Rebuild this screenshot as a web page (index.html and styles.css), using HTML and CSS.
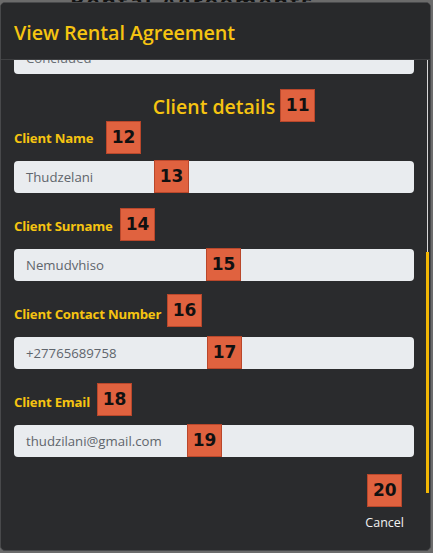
FILE: index.html
```html
<!DOCTYPE html>
<html>
<head>
<meta charset="utf-8">
<link rel="stylesheet" href="styles.css">
</head>
<body>
<div class="backdrop-text">Rental Agreements</div>
<div class="modal">
  <div class="modal-header">
    <h1 class="modal-title">View Rental Agreement</h1>
  </div>
  <div class="modal-body">
    <div class="content">
      <div class="input input-top">Concluded</div>
      <h2 class="section-title"><span class="section-text">Client details<span class="badge b11">11</span></span></h2>

      <div class="field">
        <label class="label">Client Name<span class="badge b12">12</span></label>
        <div class="input">Thudzelani<span class="badge b13">13</span></div>
      </div>
      <div class="field">
        <label class="label">Client Surname<span class="badge b14">14</span></label>
        <div class="input">Nemudvhiso<span class="badge b15">15</span></div>
      </div>
      <div class="field">
        <label class="label">Client Contact Number<span class="badge b16">16</span></label>
        <div class="input">+27765689758<span class="badge b17">17</span></div>
      </div>
      <div class="field">
        <label class="label">Client Email<span class="badge b18">18</span></label>
        <div class="input">thudzilani@gmail.com<span class="badge b19">19</span></div>
      </div>

      <div class="footer">
        <button class="cancel">Cancel<span class="badge b20">20</span></button>
      </div>
    </div>
    <div class="scroll-track"><div class="scroll-thumb"></div></div>
  </div>
</div>
</body>
</html>
```

FILE: styles.css
```css
* { box-sizing: border-box; }
html, body { margin: 0; padding: 0; }
body {
  width: 433px;
  height: 553px;
  background: #6b6b6b;
  overflow: hidden;
  position: relative;
  font-family: "Open Sans", "Noto Sans", sans-serif;
}
.backdrop-text {
  position: absolute;
  top: -14px;
  left: 70px;
  font-size: 22px;
  font-weight: 700;
  color: #111;
  letter-spacing: 2px;
}
.modal {
  position: relative;
  margin-top: 2px;
  width: 431px;
  height: 549px;
  background: #2a2b2d;
  border: 1px solid #48494b;
  border-radius: 5px;
  display: flex;
  flex-direction: column;
  overflow: hidden;
}
.modal-header {
  height: 57px;
  flex: none;
  display: flex;
  align-items: center;
  padding: 0 13px;
  background: #28292b;
  border-bottom: 1px solid #3f4042;
}
.modal-title {
  margin: 0;
  margin-top: 3px;
  font-size: 19.8px;
  font-weight: 600;
  color: #f6c411;
  letter-spacing: -0.1px;
}
.modal-body {
  flex: 1;
  position: relative;
  overflow: hidden;
}
.content {
  padding: 0 16px 0 13px;
  margin-top: -18px;
}
.input {
  position: relative;
  height: 32px;
  background: #e9ecef;
  border-radius: 4px;
  padding: 0 12px;
  display: flex;
  align-items: center;
  font-size: 13.2px;
  color: #5f656c;
}
.input-top {
  color: #6a6f75;
}
.section-title {
  margin: 19px 0 0;
  height: 28px;
  text-align: center;
  font-size: 19.5px;
  font-weight: 600;
  color: #f6c411;
  line-height: 28px;
}
.section-text {
  position: relative;
}
.field {
  margin-top: 7px;
}
.field + .field {
  margin-top: 23px;
}
.label {
  position: relative;
  display: block;
  height: 20px;
  line-height: 20px;
  font-size: 13.2px;
  font-weight: 700;
  color: #f6c411;
  letter-spacing: -0.2px;
  margin-bottom: 13px;
}
.footer {
  display: flex;
  justify-content: flex-end;
  padding-right: 10px;
  margin-top: 57px;
}
.cancel {
  position: relative;
  background: none;
  border: none;
  padding: 0;
  color: #f2f2f2;
  font-family: "Open Sans", "Noto Sans", sans-serif;
  font-size: 12.5px;
  line-height: 18px;
}
.badge {
  position: absolute;
  width: 35px;
  height: 33px;
  background: #e0623f;
  border: 1px solid #b9472b;
  color: #111;
  font-family: "DejaVu Sans", sans-serif;
  font-weight: 700;
  font-size: 17px;
  line-height: 31px;
  text-align: center;
  letter-spacing: 0;
}
.b11 { left: calc(100% + 5px); top: -4px; }
.b12 { left: 92px; top: -7px; }
.b13 { left: 140px; top: -1px; }
.b14 { left: 106px; top: -8px; }
.b15 { left: 192px; top: -1px; }
.b16 { left: 153px; top: -10px; }
.b17 { left: 193px; top: -1px; }
.b18 { left: 83px; top: -9px; }
.b19 { left: 173px; top: -1px; }
.b20 { left: 2px; top: -40px; }
.scroll-track {
  position: absolute;
  right: 1px;
  top: -3px;
  bottom: 57px;
  width: 3px;
  display: flex;
  flex-direction: column;
}
.scroll-track::before {
  content: "";
  height: 195px;
  width: 1px;
  margin-left: 1px;
  background: #d8d8d8;
  flex: none;
}
.scroll-thumb {
  flex: 1;
  width: 3px;
  background: #f2b705;
}
```
